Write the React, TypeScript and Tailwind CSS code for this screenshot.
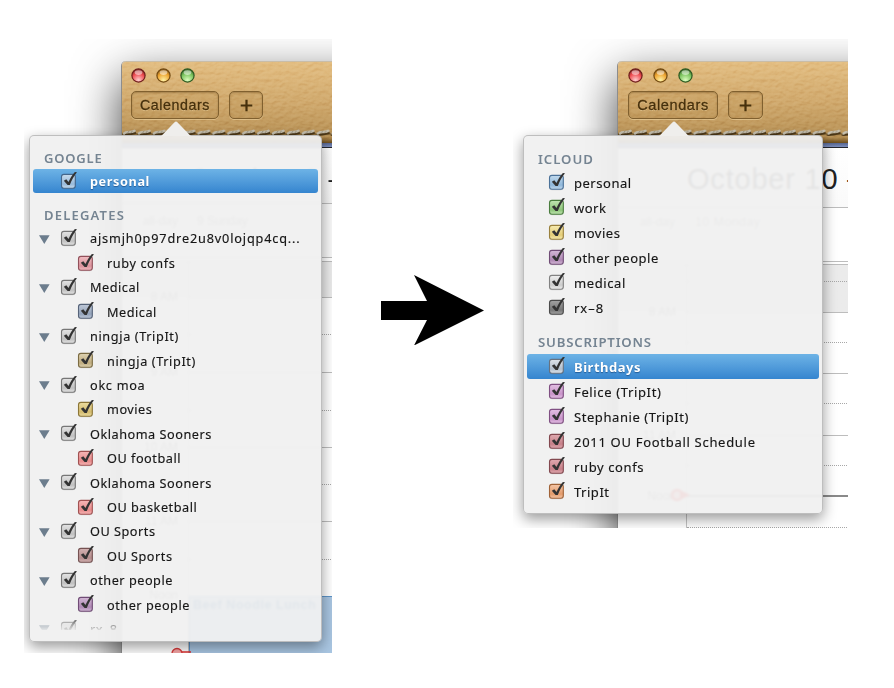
import { ReactNode } from "react";

type Tone = { top: string; bottom: string; edge: string };
type Item = { label: string; tone: keyof typeof tones; tracking?: string; parent?: boolean; child?: boolean; selected?: boolean };

const tones = {
  gray: { top: "#e4e4e4", bottom: "#c0c0c0", edge: "#777777" },
  silver: { top: "#f0f0f0", bottom: "#cbcbcb", edge: "#828282" },
  steel: { top: "#dfe4ea", bottom: "#b3bfcc", edge: "#68727f" },
  sky: { top: "#c2daee", bottom: "#8fb7da", edge: "#4c7299" },
  pick: { top: "#c9dcec", bottom: "#98badb", edge: "#45678c" },
  slate: { top: "#bfc9d8", bottom: "#93a2b9", edge: "#566379" },
  pink: { top: "#f0bcc1", bottom: "#da929b", edge: "#91505a" },
  red: { top: "#f6b6b6", bottom: "#e78b8b", edge: "#a15252" },
  rose: { top: "#e0aab0", bottom: "#c67f88", edge: "#83484f" },
  brown: { top: "#d3b2b2", bottom: "#b48c8c", edge: "#755252" },
  tan: { top: "#dfd3b2", bottom: "#bfac7f", edge: "#7b6b42" },
  gold: { top: "#ecdc9f", bottom: "#d2ba6e", edge: "#8c7637" },
  yellow: { top: "#f7ebb0", bottom: "#e3cc77", edge: "#9a813d" },
  green: { top: "#c2e5b3", bottom: "#8dc579", edge: "#4a7d3e" },
  purple: { top: "#d3b8d6", bottom: "#af88b4", edge: "#704c76" },
  violet: { top: "#e3c0e3", bottom: "#c893c9", edge: "#804f83" },
  dark: { top: "#a3a3a3", bottom: "#777777", edge: "#4b4b4b" },
  orange: { top: "#f5c6a6", bottom: "#e29a6b", edge: "#a16338" },
} satisfies Record<string, Tone>;

function Check({ tone }: { tone: keyof typeof tones }) {
  const t: Tone = tones[tone];
  return (
    <svg width="20" height="20" viewBox="0 0 20 20" className="block shrink-0">
      <defs>
        <linearGradient id={"t-" + tone} x1="0" y1="0" x2="0" y2="1">
          <stop offset="0" stopColor={t.top} />
          <stop offset="0.7" stopColor={t.bottom} />
          <stop offset="1" stopColor={t.top} />
        </linearGradient>
      </defs>
      <rect x="1" y="4.9" width="14.6" height="14.4" rx="3" fill="#000" opacity="0.12" />
      <rect x="1.5" y="4.4" width="13.8" height="13.8" rx="2.4" fill={"url(#t-" + tone + ")"} stroke={t.edge} strokeWidth="1.1" />
      <path d="M3.8 10.8 L6.3 9.3 L8.5 12 C10 8.4 12.2 4.8 14.9 1.9 L17 2.2 C13.7 6.2 11.4 10.4 9.8 14.9 L7.6 15.1 Z" fill="#333" />
    </svg>
  );
}

function Leather() {
  return (
    <svg className="absolute inset-0 size-full" preserveAspectRatio="none">
      <filter id="hide" x="0" y="0" width="100%" height="100%" colorInterpolationFilters="sRGB">
        <feTurbulence type="fractalNoise" baseFrequency="0.19 0.26" numOctaves="3" seed="8" result="n" />
        <feDiffuseLighting in="n" surfaceScale="1.5" diffuseConstant="0.7" lightingColor="#ffffff">
          <feDistantLight azimuth="250" elevation="48" />
        </feDiffuseLighting>
      </filter>
      <rect width="100%" height="100%" filter="url(#hide)" className="opacity-40 mix-blend-soft-light" />
    </svg>
  );
}

function Stitches() {
  return (
    <svg className="absolute inset-x-0 top-[65px] h-[12px] w-full">
      <defs>
        <pattern id="stitch" width="14.9" height="12" patternUnits="userSpaceOnUse">
          <path d="M0 7.2H15" stroke="#6d4e1d" strokeWidth="2" opacity="0.55" />
          <path d="M.5 7.6 C5 8.4 9 7 14 5.6" stroke="#33220a" strokeWidth="2.6" fill="none" opacity="0.75" />
          <path d="M2 6.6 C4.5 3.4 8 6.2 12.5 3.8" stroke="#c6c0af" strokeWidth="2.5" strokeLinecap="round" fill="none" />
          <path d="M5 6.8L7.2 3.8M8.6 6.4L10.4 3.8" stroke="#857a63" strokeWidth="0.7" />
        </pattern>
      </defs>
      <rect width="100%" height="12" fill="url(#stitch)" />
    </svg>
  );
}

function Light({ body, glow, edge }: { body: string; glow: string; edge: string }) {
  const id = "l" + body.slice(1);
  return (
    <svg width="15" height="15" viewBox="0 0 15 15" className="block">
      <defs>
        <radialGradient id={id} cx="0.5" cy="0.85" r="0.85">
          <stop offset="0" stopColor={glow} />
          <stop offset="0.6" stopColor={body} />
          <stop offset="1" stopColor={edge} />
        </radialGradient>
      </defs>
      <circle cx="7.5" cy="7.5" r="6.6" fill={"url(#" + id + ")"} stroke={edge} strokeWidth="1.2" />
      <ellipse cx="7.5" cy="4.6" rx="3.8" ry="2.3" fill="#fff" opacity="0.5" />
    </svg>
  );
}

function TitleBar({ wide }: { wide?: boolean }) {
  const button = "flex items-center justify-center rounded-[5px] border-[1.5px] border-[#80602f] bg-[#a07533]/10 text-[#46300c] shadow-[0_1px_0_rgba(255,235,190,.4),inset_0_1px_2px_rgba(80,50,10,.35)]";
  return (
    <div className="relative h-[82px] overflow-hidden rounded-tl-[4px] border-t border-[#c9bda8] bg-linear-to-b from-[#e3be82] via-[#d0a96d] to-[#b38d51]">
      <Leather />
      <div className={wide ? "relative ml-[10px] mt-[6px] flex gap-[10px]" : "relative ml-[9px] mt-[6px] flex gap-[9.5px]"}>
        <Light body="#ee4a4f" glow="#ffd0d0" edge="#6e1f1c" />
        <Light body="#eda32f" glow="#fff2a5" edge="#724a12" />
        <Light body="#79c25c" glow="#dcffc0" edge="#2e5a22" />
      </div>
      <div className={wide ? "relative ml-[10px] mt-[8px] flex gap-[10px]" : "relative ml-[9px] mt-[8px] flex gap-[10px]"}>
        <div className={button + (wide ? " h-[28px] w-[90px]" : " h-[28px] w-[88px]")}>
          <span className={"relative top-[0.5px] [-webkit-text-stroke:0.3px_#46300c] [text-shadow:0_1px_0_rgba(255,230,180,.4)] " + (wide ? "text-[14.5px] tracking-[0.6px]" : "text-[14.2px] tracking-[0.6px]")}>Calendars</span>
        </div>
        <div className={button + (wide ? " h-[28px] w-[35px]" : " h-[28px] w-[34px]")}>
          <svg width="13" height="13" viewBox="0 0 13 13"><path d="M6.5 .7V12.3M.7 6.5H12.3" stroke="#46300c" strokeWidth="2.2" /></svg>
        </div>
      </div>
      <Stitches />
      <div className="absolute inset-x-0 bottom-0 h-[6px] bg-linear-to-b from-[#8a672c]/0 to-[#6c4d1c]" />
    </div>
  );
}

function Denim() {
  return <div className="h-[5px] border-b-[1.5px] border-[#23262f] bg-linear-to-b from-[#56658f] to-[#7d8fbe]" />;
}

type Slot = { h: string; line: string; label?: string };

function Grid({ slots, column }: { slots: Slot[]; column: string }) {
  return (
    <div className="flex">
      <div className={column + " shrink-0 border-r border-[#c4c4c4] pr-[10px] text-right text-[12px] text-[#777]"}>
        {slots.map((s, i) => (
          <div key={i} className={s.h + " relative"}>
            {s.label && <span className="absolute -bottom-[8px] right-0 whitespace-nowrap">{s.label}</span>}
          </div>
        ))}
      </div>
      <div className="grow">
        {slots.map((s, i) => <div key={i} className={s.h + " " + s.line} />)}
      </div>
    </div>
  );
}

function Row({ item, wide }: { item: Item; wide?: boolean }) {
  const size = wide ? "h-[25px] text-[13px]" : "h-[24.42px] text-[12.7px]";
  const indent = wide ? "pl-[21px]" : item.child ? "pl-[44px]" : "pl-[27px]";
  const sel = item.selected
    ? " rounded-[3px] bg-linear-to-b from-[#6db3e6] to-[#3585cf] font-bold text-white [text-shadow:0_1px_1px_rgba(0,40,90,.5)]"
    : " text-[#161616] [-webkit-text-stroke:0.15px_#161616]";
  return (
    <div className={"relative mx-[3px] flex items-center whitespace-nowrap " + size + " " + indent + sel}>
      {item.parent && <svg width="11" height="9" viewBox="0 0 11 9" className="absolute left-[5.5px] top-[8.5px]"><path d="M0 .3H10.6L5.3 9Z" fill="#6c7d8d" /></svg>}
      <div className="-mt-[3px]"><Check tone={item.tone} /></div>
      <span className={(wide ? "relative top-[0.8px] ml-[6px] " : "relative top-[0.4px] ml-[10px] ") + (item.tracking ?? "tracking-[0.52px]")}>{item.label}</span>
    </div>
  );
}

function Heading({ children, className }: { children: ReactNode; className: string }) {
  return <div className={"font-semibold leading-[20px] text-[#758492] " + className}>{children}</div>;
}

const popover = "absolute rounded-[5px] border border-[#a9a9a9]/70 bg-[#f0f0f0]/94 font-['Noto_Sans',sans-serif] shadow-[0_5px_14px_rgba(0,0,0,.4)] backdrop-blur-[1px]";

function Tip({ className }: { className: string }) {
  return <svg width="30" height="15" viewBox="0 0 30 15" className={"absolute " + className}><path d="M0 15L1 14.2L13.6 1.2Q15 0 16.4 1.2L29 14.2L30 15Z" fill="#efeeec" /></svg>;
}

const delegates: Item[] = [
  { label: "ajsmjh0p97dre2u8v0lojqp4cq...", tone: "gray", parent: true, tracking: "tracking-[0.84px]" },
  { label: "ruby confs", tone: "pink", child: true, tracking: "tracking-[0.6px]" },
  { label: "Medical", tone: "gray", parent: true },
  { label: "Medical", tone: "slate", child: true },
  { label: "ningja (TripIt)", tone: "gray", parent: true, tracking: "tracking-[0.62px]" },
  { label: "ningja (TripIt)", tone: "tan", child: true, tracking: "tracking-[0.62px]" },
  { label: "okc moa", tone: "gray", parent: true, tracking: "tracking-[0.7px]" },
  { label: "movies", tone: "gold", child: true },
  { label: "Oklahoma Sooners", tone: "gray", parent: true },
  { label: "OU football", tone: "red", child: true },
  { label: "Oklahoma Sooners", tone: "gray", parent: true },
  { label: "OU basketball", tone: "red", child: true },
  { label: "OU Sports", tone: "gray", parent: true },
  { label: "OU Sports", tone: "brown", child: true },
  { label: "other people", tone: "gray", parent: true },
  { label: "other people", tone: "purple", child: true },
  { label: "rx–8", tone: "gray", parent: true },
];

const icloud: Item[] = [
  { label: "personal", tone: "sky" },
  { label: "work", tone: "green" },
  { label: "movies", tone: "yellow" },
  { label: "other people", tone: "purple" },
  { label: "medical", tone: "silver", tracking: "tracking-[0.6px]" },
  { label: "rx–8", tone: "dark", tracking: "tracking-[1px]" },
];

const subscriptions: Item[] = [
  { label: "Birthdays", tone: "steel", selected: true },
  { label: "Felice (TripIt)", tone: "violet", tracking: "tracking-[0.64px]" },
  { label: "Stephanie (TripIt)", tone: "violet", tracking: "tracking-[0.57px]" },
  { label: "2011 OU Football Schedule", tone: "rose", tracking: "tracking-[0.7px]" },
  { label: "ruby confs", tone: "rose", tracking: "tracking-[0.62px]" },
  { label: "TripIt", tone: "orange" },
];

const solid = "border-b border-[#bdbdbd]";
const dotted = "border-b border-dotted border-[#a8a8a8]";

const frame = "border-l border-[#8d8d8d] bg-white shadow-[0_18px_48px_rgba(0,0,0,.75)] rounded-tl-[5px]";

function Before() {
  return (
    <div className="relative mt-[39px] h-[614px] w-[308px] overflow-hidden">
      <div className={"ml-[97px] mt-[22px] h-[640px] w-[400px] " + frame}>
        <TitleBar />
        <Denim />
        <div className="h-[56px] border-b border-[#bdbdbd] bg-linear-to-b from-white to-[#f4f4f4] pl-[67px] pt-[13px] text-[28.3px] leading-[34px] tracking-[0.75px] text-[#222] whitespace-nowrap">October 9 –</div>
        <div className="flex h-[54px] border-b border-[#bdbdbd] bg-[#f8f8f8] pt-[8px] text-[12px] text-[#888]">
          <span className="w-[56px] text-right">all-day</span><span className="ml-[19px]">9 Sunday</span>
        </div>
        <div className="h-[4px] border-b border-[#bdbdbd] bg-white" />
        <div className="bg-linear-to-b from-[#ebebeb] from-0% to-[#ebebeb] to-100% bg-[length:100%_36px] bg-no-repeat">
          <Grid column="w-[67px]" slots={[
            { h: "h-[36px]", line: solid, label: "8 AM" },
            { h: "h-[37px]", line: dotted },
            { h: "h-[38px]", line: solid, label: "9 AM" },
            { h: "h-[38px]", line: dotted },
            { h: "h-[37px]", line: solid, label: "10 AM" },
            { h: "h-[37px]", line: dotted },
            { h: "h-[37px]", line: solid, label: "11 AM" },
            { h: "h-[38px]", line: dotted },
            { h: "h-[36px]", line: "", label: "Noon" },
            { h: "h-[70px]", line: "border-t border-l border-[#5c93c7] bg-[#a9c6e2]" },
          ]} />
        </div>
      </div>
      <div className="absolute left-[169px] top-[557px] text-[12.5px] font-bold tracking-[0.55px] text-[#00509c]">Beef Noodle Lunch</div>
      <svg width="20" height="14" className="absolute left-[147px] top-[608px]"><circle cx="6" cy="6.5" r="5" fill="#f6a5a5" stroke="#d83a3a" strokeWidth="1.3" /><path d="M11 5h9" stroke="#e03131" strokeWidth="1.5" /></svg>
      <div className={popover + " left-[5px] top-[96px] h-[507px] w-[293px]"}>
        <Tip className="left-[131px] -top-[15px]" />
        <Heading className="mt-[11.5px] pl-[14px] text-[13px] tracking-[0.8px]">GOOGLE</Heading>
        <div className="mt-[1.5px]"><Row item={{ label: "personal", tone: "pick", selected: true, tracking: "tracking-[0.6px]" }} /></div>
        <Heading className="mt-[11.5px] pl-[14px] text-[13px] tracking-[1.2px]">DELEGATES</Heading>
        <div className="mt-[1.5px] h-[404px] overflow-hidden [mask-image:linear-gradient(to_bottom,#000_388px,transparent_406px)]">
          {delegates.map((d, i) => <Row key={i} item={d} />)}
        </div>
      </div>
    </div>
  );
}

function After() {
  return (
    <div className="relative mt-[39px] h-[489px] w-[335px] overflow-hidden">
      <div className={"ml-[104px] mt-[22px] h-[560px] w-[400px] " + frame}>
        <TitleBar wide />
        <Denim />
        <div className="h-[60px] border-b border-[#bdbdbd] bg-linear-to-b from-white to-[#fafafa] pl-[69px] pt-[14px] text-[29px] leading-[34px] tracking-[0.8px] text-[#222] whitespace-nowrap">October 10 –</div>
        <div className="flex h-[54px] border-b border-[#bdbdbd] bg-white pt-[5px] text-[12px] text-[#888]">
          <span className="w-[57px] text-right">all-day</span><span className="ml-[20px] text-[12.5px] tracking-[0.4px]">10 Monday</span>
        </div>
        <div className="h-[3px] border-b border-[#bdbdbd] bg-white" />
        <div className="bg-linear-to-b from-[#ebebeb] from-0% to-[#ebebeb] to-100% bg-[length:100%_47px] bg-no-repeat">
          <Grid column="w-[69px]" slots={[
            { h: "h-[17px]", line: dotted },
            { h: "h-[31px]", line: solid, label: "8 AM" },
            { h: "h-[30px]", line: dotted },
            { h: "h-[31px]", line: solid },
            { h: "h-[30px]", line: dotted },
            { h: "h-[32px]", line: solid, label: "11 AM" },
            { h: "h-[30px]", line: dotted },
            { h: "h-[31px]", line: "border-b-2 border-[#8a8a8a]", label: "Noon" },
            { h: "h-[31px]", line: dotted },
            { h: "h-[40px]", line: "" },
          ]} />
        </div>
      </div>
      <svg width="20" height="14" className="absolute left-[158px] top-[449px]"><circle cx="6" cy="7" r="5" fill="#f6a5a5" stroke="#ff0000" strokeWidth="2.5" /><path d="M9 2L19 7L9 12Z" fill="#ff0000" /></svg>
      <div className={popover + " left-[10px] top-[96px] h-[379px] w-[300px]"}>
        <Tip className="left-[135px] -top-[15px]" />
        <Heading className="mt-[12.5px] pl-[14px] text-[13.2px] tracking-[0.95px]">ICLOUD</Heading>
        <div className="mt-[1.5px]">{icloud.map((d) => <Row key={d.label} item={d} wide />)}</div>
        <Heading className="mt-[12px] pl-[14px] text-[13.2px] tracking-[0.8px]">SUBSCRIPTIONS</Heading>
        <div className="mt-[2px]">{subscriptions.map((d) => <Row key={d.label} item={d} wide />)}</div>
      </div>
    </div>
  );
}

export default function App() {
  return (
    <main className="flex h-[688px] w-[894px] items-start overflow-hidden bg-white pl-[24px] font-['Liberation_Sans',Arial,sans-serif]">
      <Before />
      <svg width="103" height="70" viewBox="0 0 103 70" className="ml-[49px] mr-[29px] mt-[275px] shrink-0">
        <path d="M0 26H46L33 0L103 35.5L33 70.5L46 45H0Z" fill="#000" />
      </svg>
      <After />
    </main>
  );
}
